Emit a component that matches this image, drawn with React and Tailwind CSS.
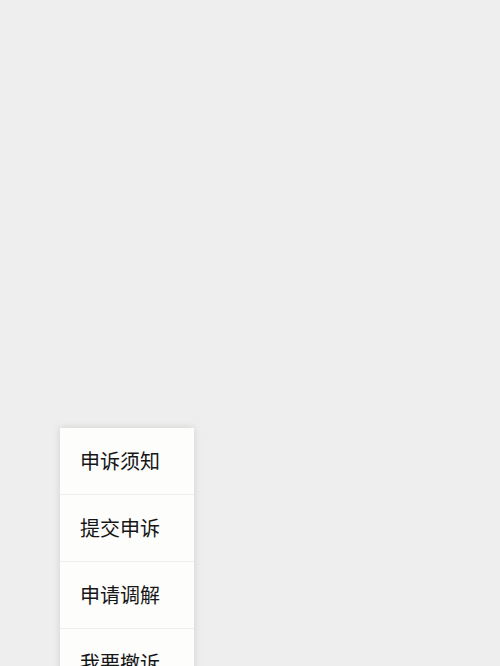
const items = ["申诉须知", "提交申诉", "申请调解", "我要撤诉"];

export default function App() {
  return (
    <div
      className="w-[500px] h-[666px] overflow-hidden bg-[#eeeeee] flex flex-col"
      style={{ fontFamily: '"Noto Sans CJK SC", "Noto Sans", sans-serif' }}
    >
      <div className="h-[428px] shrink-0" />
      <div className="ml-[60px] w-[134px] bg-[#fdfdfc] shadow-[0_0_8px_rgba(0,0,0,0.12)]">
        {items.map((label, i) => (
          <div
            key={label}
            className={
              i < items.length - 1
                ? "h-[67px] flex items-center pl-[20px] border-b border-[#eeeeee]"
                : "h-[67px] flex items-center pl-[20px]"
            }
          >
            <span className="text-[20px] leading-none text-[#161616]">{label}</span>
          </div>
        ))}
      </div>
    </div>
  );
}
